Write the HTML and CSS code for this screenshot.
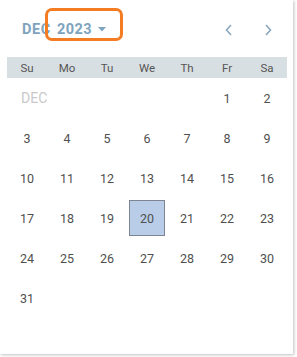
FILE: index.html
```html
<!DOCTYPE html>
<html>
<head>
<meta charset="utf-8">
<link rel="stylesheet" href="styles.css">
</head>
<body>
<div class="card">
  <div class="head">
    <div class="title">
      <span class="month">DEC</span>
      <span class="year">2023</span>
      <svg class="caret" width="8" height="5" viewBox="0 0 8 5"><path d="M0 0h8L4 4.5z" fill="#7ea3be"/></svg>
      <span class="mark"></span>
    </div>
    <div class="nav">
      <svg width="10" height="12" viewBox="0 0 10 12"><path d="M7 1L2.5 6 7 11" fill="none" stroke="#8aa8bf" stroke-width="1.6"/></svg>
      <svg width="10" height="12" viewBox="0 0 10 12"><path d="M3 1l4.5 5L3 11" fill="none" stroke="#8aa8bf" stroke-width="1.6"/></svg>
    </div>
  </div>
  <div class="grid">
    <div class="dn">Su</div><div class="dn">Mo</div><div class="dn">Tu</div><div class="dn">We</div><div class="dn">Th</div><div class="dn">Fr</div><div class="dn">Sa</div>
    <div class="d mon">DEC</div><div class="d"></div><div class="d"></div><div class="d"></div><div class="d"></div><div class="d">1</div><div class="d">2</div>
    <div class="d">3</div><div class="d">4</div><div class="d">5</div><div class="d">6</div><div class="d">7</div><div class="d">8</div><div class="d">9</div>
    <div class="d">10</div><div class="d">11</div><div class="d">12</div><div class="d">13</div><div class="d">14</div><div class="d">15</div><div class="d">16</div>
    <div class="d">17</div><div class="d">18</div><div class="d">19</div><div class="d"><span class="sel">20</span></div><div class="d">21</div><div class="d">22</div><div class="d">23</div>
    <div class="d">24</div><div class="d">25</div><div class="d">26</div><div class="d">27</div><div class="d">28</div><div class="d">29</div><div class="d">30</div>
    <div class="d">31</div>
  </div>
</div>
</body>
</html>
```
FILE: styles.css
```css
html, body { margin: 0; padding: 0; background: #fff; }
body { font-family: Roboto, "Liberation Sans", sans-serif; width: 297px; height: 357px; overflow: hidden; }
.card {
  width: 293px;
  height: 354px;
  box-sizing: border-box;
  background: #fff;
  box-shadow: 1px 1px 3px rgba(0,0,0,0.25);
  padding: 0 6px 0 7px;
}
.head {
  height: 57px;
  display: flex;
  align-items: center;
  justify-content: space-between;
  padding-top: 2px;
  box-sizing: border-box;
}
.title {
  position: relative;
  display: flex;
  align-items: center;
  padding-left: 15px;
  font-weight: bold;
  font-size: 14.5px;
  color: #7ea3be;
  letter-spacing: 0.6px;
}
.year { margin-left: 6px; letter-spacing: 0.5px; }
.caret { margin-left: 6px; }
.mark {
  position: absolute;
  left: 38px;
  top: -13px;
  width: 72px;
  height: 27px;
  border: 3px solid #f47c22;
  border-radius: 7px;
}
.nav { display: flex; gap: 29px; padding-right: 14px; }
.grid {
  display: grid;
  grid-template-columns: repeat(7, 40px);
  grid-template-rows: 21px;
  grid-auto-rows: 40px;
}
.dn {
  background: #d8dfe2;
  display: flex;
  align-items: center;
  justify-content: center;
  font-size: 11.5px;
  color: #555;
}
.d {
  display: flex;
  align-items: center;
  justify-content: center;
  font-size: 12.5px;
  color: #505050;
}
.mon { color: #c9c9c9; font-size: 14px; justify-content: flex-start; padding-left: 14px; }
.sel {
  width: 36px;
  height: 36px;
  box-sizing: border-box;
  background: #b9cde9;
  border: 1px solid #7c8591;
  display: flex;
  align-items: center;
  justify-content: center;
}
```
